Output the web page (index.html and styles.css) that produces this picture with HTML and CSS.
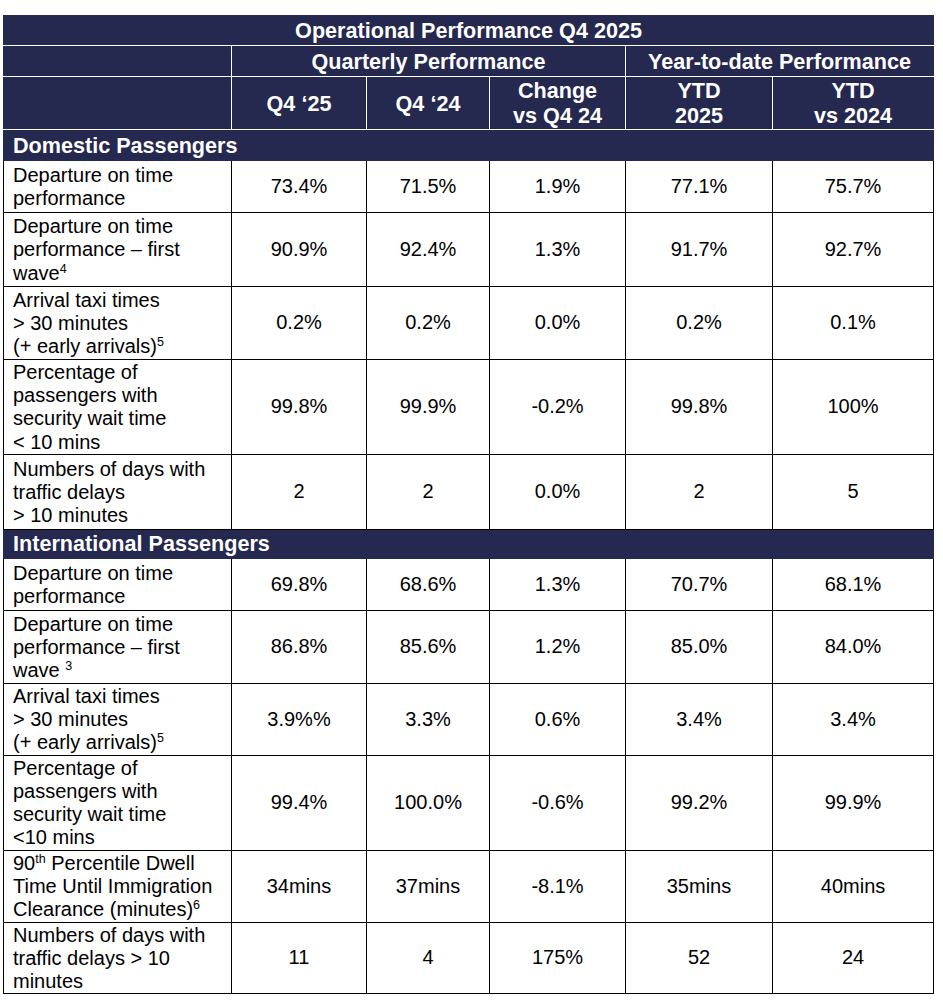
FILE: index.html
```html
<!DOCTYPE html>
<html lang="en">
<head>
<meta charset="utf-8">
<title>Operational Performance Q4 2025</title>
<link rel="stylesheet" href="styles.css">
</head>
<body>
<table class="perf">
  <colgroup>
    <col class="c-label">
    <col class="c-q25">
    <col class="c-q24">
    <col class="c-chg">
    <col class="c-ytd">
    <col class="c-vs">
  </colgroup>
  <thead>
    <tr class="hr1">
      <th colspan="6">Operational Performance Q4 2025</th>
    </tr>
    <tr class="hr2">
      <th></th>
      <th colspan="3">Quarterly Performance</th>
      <th colspan="2">Year-to-date Performance</th>
    </tr>
    <tr class="hr3">
      <th></th>
      <th>Q4 ‘25</th>
      <th>Q4 ‘24</th>
      <th>Change<br>vs Q4 24</th>
      <th>YTD<br>2025</th>
      <th>YTD<br>vs 2024</th>
    </tr>
  </thead>
  <tbody>
    <tr class="section first">
      <td colspan="6">Domestic Passengers</td>
    </tr>
    <tr class="r52">
      <td class="label">Departure on time<br>performance</td>
      <td>73.4%</td><td>71.5%</td><td>1.9%</td><td>77.1%</td><td>75.7%</td>
    </tr>
    <tr class="r74">
      <td class="label">Departure on time<br>performance – first<br>wave<sup>4</sup></td>
      <td>90.9%</td><td>92.4%</td><td>1.3%</td><td>91.7%</td><td>92.7%</td>
    </tr>
    <tr class="r73">
      <td class="label">Arrival taxi times<br>&gt; 30 minutes<br>(+ early arrivals)<sup>5</sup></td>
      <td>0.2%</td><td>0.2%</td><td>0.0%</td><td>0.2%</td><td>0.1%</td>
    </tr>
    <tr class="r94">
      <td class="label">Percentage of<br>passengers with<br>security wait time<br>&lt; 10 mins</td>
      <td>99.8%</td><td>99.9%</td><td>-0.2%</td><td>99.8%</td><td>100%</td>
    </tr>
    <tr class="r75">
      <td class="label">Numbers of days with<br>traffic delays<br>&gt; 10 minutes</td>
      <td>2</td><td>2</td><td>0.0%</td><td>2</td><td>5</td>
    </tr>
    <tr class="section">
      <td colspan="6">International Passengers</td>
    </tr>
    <tr class="r52">
      <td class="label">Departure on time<br>performance</td>
      <td>69.8%</td><td>68.6%</td><td>1.3%</td><td>70.7%</td><td>68.1%</td>
    </tr>
    <tr class="r73">
      <td class="label">Departure on time<br>performance – first<br>wave <sup>3</sup></td>
      <td>86.8%</td><td>85.6%</td><td>1.2%</td><td>85.0%</td><td>84.0%</td>
    </tr>
    <tr class="r72">
      <td class="label">Arrival taxi times<br>&gt; 30 minutes<br>(+ early arrivals)<sup>5</sup></td>
      <td>3.9%%</td><td>3.3%</td><td>0.6%</td><td>3.4%</td><td>3.4%</td>
    </tr>
    <tr class="r94">
      <td class="label">Percentage of<br>passengers with<br>security wait time<br>&lt;10 mins</td>
      <td>99.4%</td><td>100.0%</td><td>-0.6%</td><td>99.2%</td><td>99.9%</td>
    </tr>
    <tr class="r72">
      <td class="label">90<sup>th</sup> Percentile Dwell<br>Time Until Immigration<br>Clearance (minutes)<sup>6</sup></td>
      <td>34mins</td><td>37mins</td><td>-8.1%</td><td>35mins</td><td>40mins</td>
    </tr>
    <tr class="r71">
      <td class="label">Numbers of days with<br>traffic delays &gt; 10<br>minutes</td>
      <td>11</td><td>4</td><td>175%</td><td>52</td><td>24</td>
    </tr>
  </tbody>
</table>
</body>
</html>
```

FILE: styles.css
```css
html, body {
  margin: 0;
  padding: 0;
  background: #ffffff;
}

body {
  font-family: "Liberation Sans", Arial, sans-serif;
  color: #000000;
}

.perf {
  margin: 15px 0 0 3px;
  width: 930px;
  table-layout: fixed;
  border-collapse: collapse;
}

.c-label { width: 228px; }
.c-q25 { width: 135px; }
.c-q24 { width: 123px; }
.c-chg { width: 136px; }
.c-ytd { width: 147px; }
.c-vs { width: 161px; }

.perf th {
  background: #25284f;
  color: #ffffff;
  font-weight: bold;
  font-size: 21.6px;
  line-height: 25px;
  text-align: center;
  vertical-align: middle;
  padding: 0;
  border: 1px solid #ffffff;
}

.hr1 th {
  border-top-color: #25284f;
  border-left-color: #25284f;
  border-right-color: #25284f;
}

.hr2 th:first-child,
.hr3 th:first-child {
  border-left-color: #25284f;
}

.hr2 th:last-child,
.hr3 th:last-child {
  border-right-color: #25284f;
}

.hr1 { height: 30px; }
.hr2 { height: 31px; }
.hr3 { height: 53px; }

.perf td {
  font-size: 20px;
  line-height: 23.2px;
  text-align: center;
  vertical-align: middle;
  padding: 0 8px;
  border: 1px solid #000000;
}

.perf td.label {
  text-align: left;
  padding-left: 9px;
  padding-top: 1px;
}

.perf sup {
  font-size: 12.5px;
  line-height: 0;
  vertical-align: 7px;
}

.section td {
  background: #25284f;
  color: #ffffff;
  font-weight: bold;
  font-size: 21.6px;
  line-height: 25px;
  text-align: left;
  padding: 0 9px;
  border: 1px solid #25284f;
}

.section { height: 29px; }
.section.first { height: 31px; }
.section.first td { border-top-color: #ffffff; }

.r52 { height: 52px; }
.r71 { height: 71px; }
.r72 { height: 72px; }
.r73 { height: 73px; }
.r74 { height: 74px; }
.r75 { height: 75px; }
.r94 { height: 94px; }
```
